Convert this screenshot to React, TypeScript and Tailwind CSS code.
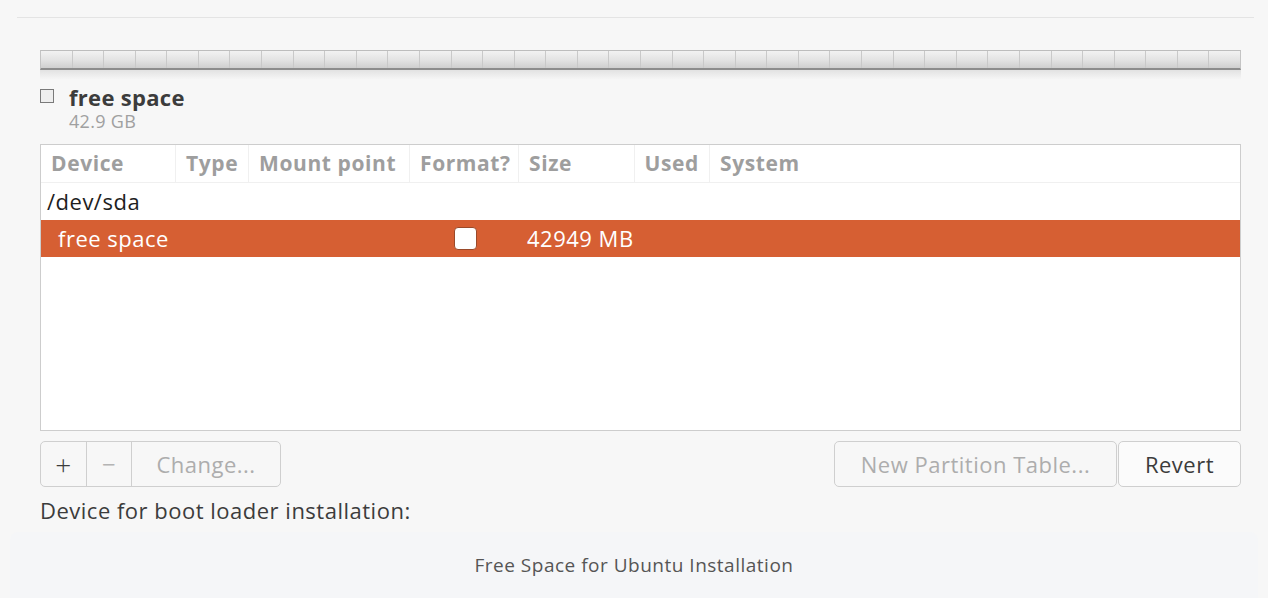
import React from "react";

const CELLS = Array.from({ length: 38 }, (_, i) => i);

const COLS = [
  { label: "Device", w: "w-[135px]" },
  { label: "Type", w: "w-[73px]" },
  { label: "Mount point", w: "w-[161px]" },
  { label: "Format?", w: "w-[109px]" },
  { label: "Size", w: "w-[116px]" },
  { label: "Used", w: "w-[75px]", right: true },
  { label: "System", w: "flex-1" },
];

function PartitionBar() {
  return (
    <div>
      <div className="flex h-[20px] border-t border-[#bdbdbd] border-b-2 border-b-[#8c8c8c] border-x border-x-[#c4c4c4]">
        {CELLS.map((i) => (
          <div
            key={i}
            className="flex-1 border-r border-[#c9c9c9] last:border-r-0 bg-gradient-to-b from-[#f2f2f2] via-[#e4e4e4] to-[#cfcfcf]"
          />
        ))}
      </div>
      <div className="h-[10px] bg-gradient-to-b from-[#e2e2e2] to-transparent" />
    </div>
  );
}

export default function App() {
  return (
    <div
      className="h-[598px] w-full bg-[#f7f7f7] flex flex-col"
      style={{ fontFamily: '"Open Sans", "Noto Sans", sans-serif' }}
    >
      <div className="pl-[17px] pr-[14px] pt-[17px]">
        <div className="border-t border-[#e4e4e4] px-[23px] pr-[13px] pt-[32px]">
          <PartitionBar />

          <div className="mt-[4px] flex items-start gap-[15px]">
            <div className="mt-[5px] h-[14px] w-[14px] border border-[#7a7a7a] bg-[#eeeeee]" />
            <div>
              <div className="text-[22px] leading-[26px] tracking-[0.3px] font-bold text-[#3c3c3c]">free space</div>
              <div className="text-[18px] leading-[22px] tracking-[0.3px] text-[#a0a0a0]">42.9 GB</div>
            </div>
          </div>

          <div className="mt-[12px] h-[287px] border border-[#cdcdcd] bg-white flex flex-col text-[22px] tracking-[0.5px]">
            <div className="flex h-[38px] border-b border-[#f0f0f0]">
              {COLS.map((c) => (
                <div
                  key={c.label}
                  className={`${c.w} flex items-center px-[10px] border-r border-[#f0f0f0] last:border-r-0 text-[21px] tracking-[0.6px] font-bold text-[#9e9e9e] ${c.right ? "justify-end" : ""}`}
                >
                  {c.label}
                </div>
              ))}
            </div>
            <div className="flex h-[37px] items-center px-[6px] text-[#1e1e1e]">/dev/sda</div>
            <div className="flex h-[37px] items-center bg-[#d65f33] text-white">
              <div className="w-[369px] pl-[17px]">free space</div>
              <div className="w-[109px] flex justify-center pl-[2px]">
                <div className="h-[23px] w-[23px] rounded-[4px] bg-white border border-[#9a4a2a]" />
              </div>
              <div className="pl-[8px]">42949 MB</div>
            </div>
          </div>

          <div className="mt-[10px] flex items-center justify-between text-[22px] tracking-[0.5px]">
            <div className="flex h-[46px] rounded-[5px] border border-[#cfcfcf] bg-[#f7f7f7]">
              <div className="w-[46px] flex items-center justify-center text-[28px] font-light text-[#3c3c3c] border-r border-[#cfcfcf]">+</div>
              <div className="w-[45px] flex items-center justify-center text-[24px] text-[#b4b4b4] border-r border-[#cfcfcf]">−</div>
              <div className="w-[148px] flex items-center justify-center text-[#adadad]">Change...</div>
            </div>
            <div className="flex h-[46px] gap-[1px]">
              <div className="w-[283px] flex items-center justify-center rounded-[5px] border border-[#cfcfcf] text-[#adadad]">New Partition Table...</div>
              <div className="w-[123px] flex items-center justify-center rounded-[5px] border border-[#cfcfcf] bg-[#fbfbfb] text-[#3c3c3c]">Revert</div>
            </div>
          </div>

          <div className="mt-[10px] text-[22px] leading-[26px] tracking-[0.5px] text-[#3c3c3c]">Device for boot loader installation:</div>
        </div>
      </div>

      <div className="mx-[10px] mt-[9px] flex-1 rounded-t-[8px] bg-[#f5f6f8] flex items-start justify-center pt-[21px]">
        <div className="text-[19px] leading-[24px] tracking-[0.5px] text-[#555555]">
          Free Space for Ubuntu Installation
        </div>
      </div>
    </div>
  );
}
